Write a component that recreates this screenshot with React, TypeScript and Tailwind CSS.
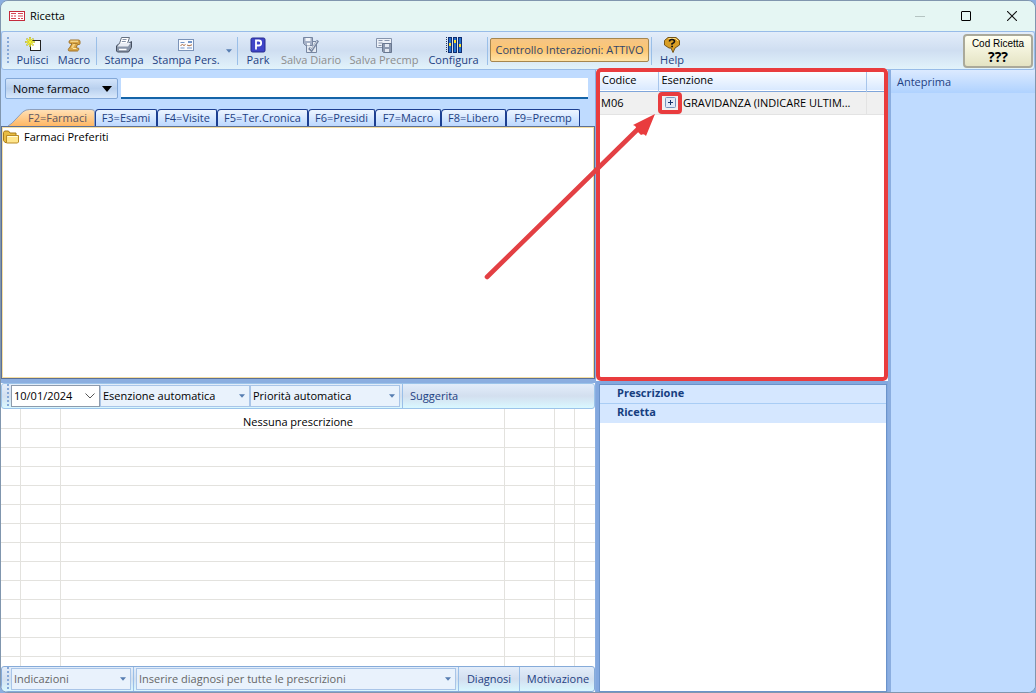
import React from "react";

type IconProps = { children: React.ReactNode };

function Glyph({ children }: IconProps) {
  return (
    <svg viewBox="0 0 16 16" className="h-4 w-4 shrink-0" aria-hidden="true">
      {children}
    </svg>
  );
}

const CleanIcon = () => (
  <Glyph>
    <rect x="5.5" y="3.5" width="10" height="10" fill="#fff" stroke="#222" />
    <path d="M5 0v10M0 5h10M1.500 1.500l7 7M8.500 1.500l-7 7" stroke="#b8b428" strokeWidth="1.600" />
    <path d="M5 1v8M1 5h8M2 2l6 6M8 2l-6 6" stroke="#f7f238" strokeWidth="1" />
  </Glyph>
);

const MacroIcon = () => (
  <Glyph>
    <path d="M4.500 3h8q1.500 0 1.500 1.500v2q0 1-1 1h-1.500l-1.500 3.500h2q1 0 .8 1.200T11.500 14H3.500q-1.500 0-1.200-1.500T3.500 11l2.500-4.500H4.500Q3 6.500 3 5t1.500-2z" fill="#d9a646" stroke="#a17328" />
    <path d="M4.500 4.200h7.500M7 11.500h3.500" stroke="#ffe9a8" />
    <path d="M8.500 6.500l-2.500 4.500" stroke="#f6d27e" strokeWidth="2" />
    <path d="M7 6.500h4.500" stroke="#a17328" strokeWidth=".8" />
  </Glyph>
);

const PrinterIcon = () => (
  <Glyph>
    <path d="M5.500.5h8l-2 6h-8z" fill="#fff" stroke="#65707f" />
    <path d="M6.500 2.500h4M5.800 4.500h4" stroke="#8693a8" />
    <path d="M3 6.500h9.500l3-2v6l-3 4.500H1.500l-1-1V9z" fill="#8995a8" stroke="#454f60" />
    <path d="M1.500 9.500h10.500l2.500-3.500H4z" fill="#e9edf4" />
    <path d="M3 12.500h7.500" stroke="#fff" strokeWidth="1.500" />
  </Glyph>
);

const CardIcon = () => (
  <Glyph>
    <rect x=".5" y="2.500" width="15" height="11" fill="#fafcff" stroke="#7b93b8" />
    <path d="M2.500 5.500h4M2.500 11h4M9 11h5" stroke="#7295c8" />
    <path d="M10 5h4" stroke="#7295c8" strokeWidth="2" />
    <path d="M2.500 8.500l2-1 1.500 1 1.500-1M9 8l2 .8 3-1" stroke="#aa6c42" fill="none" />
  </Glyph>
);

const ParkIcon = () => (
  <Glyph>
    <rect x="1" y="1" width="14" height="14" rx="1.500" fill="#3f45c8" stroke="#292d8e" />
    <path d="M6 12.500v-9h2.800q2.400 0 2.400 2.500T8.800 8.500H6" fill="none" stroke="#fff" strokeWidth="1.800" />
  </Glyph>
);

const SaveDiaryIcon = () => (
  <Glyph>
    <path d="M3.500 4.500h10v11h-10z" fill="#e4e9f1" stroke="#7786a1" />
    <path d="M.5.5h9v8h-7l-2-2z" fill="#a4b0c6" stroke="#7786a1" />
    <path d="M2.500 1h5v3h-5zM4 6h3v2.500H4z" fill="#f2f5fa" />
    <path d="M6 11l2.500 2.500L15 3.500" fill="none" stroke="#7786a1" strokeWidth="2.600" />
    <path d="M7 11l1.500 1.500L14 4" fill="none" stroke="#eef2f8" strokeWidth=".8" />
  </Glyph>
);

const SavePrecmpIcon = () => (
  <Glyph>
    <path d="M.5 1.500h15v9H.5z" fill="#edf1f8" stroke="#8795ad" />
    <path d="M2.500 3.500h4M8.500 3.500h5M2.500 6h4M2.500 8.500h3" stroke="#8795ad" />
    <path d="M6.500 6.500h9v9h-8l-1-1z" fill="#8c99b0" stroke="#68778f" />
    <path d="M9 7h4v3H9zM9 12h4v3H9z" fill="#e2e8f2" />
  </Glyph>
);

const SlidersIcon = () => (
  <Glyph>
    <path d="M.5 0v16" stroke="#26385e" strokeDasharray="1 1" />
    <path d="M2 0h4v16H2zM7 0h4v16H7zM12 0h4v16h-4z" fill="#102d70" />
    <path d="M4 1v14M9 1v14M14 1v14" stroke="#2672cf" strokeWidth="2" />
    <path d="M3 6h2v3H3zM8 3h2v3H8zM13 7h2v3h-2z" fill="#ffe32a" />
  </Glyph>
);

const HelpIcon = () => (
  <Glyph>
    <path d="M4 .5h8l3.500 3v4.500L11 11l-2 4.500-2-4.500H5L.5 8V3.500z" fill="#d99e24" stroke="#765518" />
    <path d="M4.500 1.500h7l2.500 2.500" stroke="#ffe086" fill="none" />
    <path d="M5.500 4.500q0-2 2.500-2t2.500 2q0 1.200-2.500 2.300v1" fill="none" stroke="#111" strokeWidth="1.600" />
    <path d="M7.200 8.800h1.800v1.500H7.200z" fill="#111" />
  </Glyph>
);

function Down({ dark }: { dark?: boolean }) {
  return (
    <svg viewBox="0 0 10 6" className={dark ? "h-[6px] w-[10px]" : "h-[4px] w-[6px]"} aria-hidden="true">
      <path d="M0 0h10L5 6z" fill={dark ? "#000" : "#567db1"} />
    </svg>
  );
}

function ToolButton({ icon, label, width, disabled }: { icon: React.ReactNode; label: string; width: string; disabled?: boolean }) {
  return (
    <button
      disabled={disabled}
      className={`flex shrink-0 flex-col items-center whitespace-nowrap leading-[14px] ${width} ${disabled ? "text-[#8d8d8d]" : "text-[#1e3f82]"}`}
    >
      {icon}
      {label}
    </button>
  );
}

const Divider = () => <span className="mx-[2px] w-px shrink-0 self-stretch bg-[#9abfe8]" />;

const Grip = () => (
  <span className="ml-[5px] mr-[2px] w-[2px] shrink-0 self-stretch bg-[repeating-linear-gradient(to_bottom,#86a8d8_0_2px,transparent_2px_4px)]" />
);

function Combo({ label, width, muted }: { label: string; width: string; muted?: boolean }) {
  return (
    <div className={`relative h-[22px] border border-[#a9c5e8] bg-[#e9f2fc] ${width}`}>
      <select
        aria-label={label}
        className={`h-full w-full appearance-none bg-transparent pl-[2px] pr-4 outline-none ${muted ? "text-[#666]" : "text-black"}`}
      >
        <option>{label}</option>
      </select>
      <span className="pointer-events-none absolute right-1 top-2">
        <Down />
      </span>
    </div>
  );
}

const tabs = [
  { label: "F3=Esami", width: "w-[62px]" },
  { label: "F4=Visite", width: "w-[60px]" },
  { label: "F5=Ter.Cronica", width: "w-[91px]" },
  { label: "F6=Presidi", width: "w-[67px]" },
  { label: "F7=Macro", width: "w-[66px]" },
  { label: "F8=Libero", width: "w-[65px]" },
  { label: "F9=Precmp", width: "w-[74px]" },
];

function TitleBar() {
  return (
    <header className="flex h-[30px] shrink-0 items-center bg-[#e5f6f3] pl-2">
      <svg viewBox="0 0 16 10" className="h-[10px] w-4" aria-hidden="true">
        <rect x=".5" y=".5" width="15" height="9" fill="#fff" stroke="#c42b3c" />
        <path d="M2 2.500h5M9 2.500h5M2 5h2M5 5h2M9 5h5M2 7.500h5M9 7.500h2M12 7.500h2" stroke="#d44755" />
      </svg>
      <h1 className="ml-[5px] flex-1 text-[11px] text-black">Ricetta</h1>
      <button aria-label="Riduci" className="flex h-full w-[46px] items-center justify-center">
        <span className="h-px w-[10px] bg-[#b5c4c2]" />
      </button>
      <button aria-label="Ingrandisci" className="flex h-full w-[46px] items-center justify-center">
        <span className="h-[10px] w-[10px] rounded-[1px] border border-black" />
      </button>
      <button aria-label="Chiudi" className="flex h-full w-[46px] items-center justify-center">
        <svg viewBox="0 0 10 10" className="h-[10px] w-[10px]" aria-hidden="true">
          <path d="M0 0l10 10M10 0L0 10" stroke="#111" strokeWidth="1.100" />
        </svg>
      </button>
    </header>
  );
}

function Toolbar() {
  return (
    <div className="flex h-[39px] shrink-0 items-start rounded-[3px] border border-[#98bce8] bg-linear-to-b from-[#e3edfa] via-[#cfdef1] to-[#e2f3fb] pb-1 pt-[5px]">
      <Grip />
      <ToolButton icon={<CleanIcon />} label="Pulisci" width="w-[43px]" />
      <ToolButton icon={<MacroIcon />} label="Macro" width="w-[40px]" />
      <Divider />
      <ToolButton icon={<PrinterIcon />} label="Stampa" width="w-[50px]" />
      <ToolButton icon={<CardIcon />} label="Stampa Pers." width="w-[74px]" />
      <button aria-label="Altre stampe" className="flex w-[12px] justify-center self-center"><Down /></button>
      <Divider />
      <ToolButton icon={<ParkIcon />} label="Park" width="w-[36px]" />
      <ToolButton icon={<SaveDiaryIcon />} label="Salva Diario" width="w-[70px]" disabled />
      <ToolButton icon={<SavePrecmpIcon />} label="Salva Precmp" width="w-[76px]" disabled />
      <ToolButton icon={<SlidersIcon />} label="Configura" width="w-[63px]" />
      <Divider />
      <button className="mt-px h-6 w-[159px] shrink-0 whitespace-nowrap rounded-[2px] border border-[#a5864f] bg-linear-to-b from-[#f5c585] via-[#fdc671] to-[#ffe3a6] text-[#33466b]">
        Controllo Interazioni: ATTIVO
      </button>
      <Divider />
      <ToolButton icon={<HelpIcon />} label="Help" width="w-[36px]" />
      <button className="ml-auto mr-px flex h-[34px] w-[70px] shrink-0 flex-col items-center justify-center self-center rounded-[4px] border-2 border-[#aaa99a] bg-linear-to-b from-[#fffff0] to-[#e4e3c3] text-black">
        <span className="font-['Liberation_Sans',sans-serif] text-[10px] leading-[12px]">Cod Ricetta</span>
        <span className="text-[14px] font-bold leading-[14px]">???</span>
      </button>
    </div>
  );
}

function DrugSearch() {
  return (
    <section className="mb-1 flex min-h-0 flex-col bg-[#bfdbff]">
      <div className="flex pb-[10px] pl-1 pr-[7px] pt-2">
        <button className="flex h-[21px] w-[113px] shrink-0 items-center justify-between rounded-[2px] border border-[#83a8d8] bg-linear-to-b from-[#d3e4fa] via-[#b9d0ee] to-[#d8e8fb] pl-[7px] pr-[5px] text-black">
          Nome farmaco
          <Down dark />
        </button>
        <input aria-label="Nome farmaco" className="ml-[3px] h-[21px] min-w-0 flex-1 border-b-2 border-[#1464a8] bg-white px-1 outline-none" />
      </div>
      <div role="tablist" className="flex h-[17px] shrink-0 pl-[7px]">
        <button role="tab" aria-selected="true" className="relative h-[17px] w-[87px] shrink-0 whitespace-nowrap pl-3 text-[#5c5560]">
          <svg viewBox="0 0 88 18" preserveAspectRatio="none" className="absolute inset-0 h-full w-full" aria-hidden="true">
            <defs>
              <linearGradient id="active" x1="0" y1="0" x2="0" y2="1">
                <stop offset="0" stopColor="#ffe1b8" />
                <stop offset="1" stopColor="#ffb763" />
              </linearGradient>
            </defs>
            <path d="M0 18L4 15 15 3Q18 .5 22 .5H84Q87.500 .5 87.500 3V18" fill="url(#active)" stroke="#8a9dba" />
          </svg>
          <span className="relative">F2=Farmaci</span>
        </button>
        {tabs.map((tab) => (
          <button
            key={tab.label}
            role="tab"
            aria-selected="false"
            className={`h-[17px] shrink-0 whitespace-nowrap rounded-tl-[4px] rounded-tr-[2px] border border-b-0 border-[#1d3f91] bg-linear-to-b from-[#edf5ff] to-[#bcd8ff] text-[#1e3f82] ${tab.width}`}
          >
            {tab.label}
          </button>
        ))}
      </div>
      <div className="min-h-0 flex-1 border border-[#5c6f94] bg-white">
        <div className="h-full border border-[#f6dfa2]">
          <ul>
            <li className="flex h-[18px] items-center gap-[5px] text-black">
              <svg viewBox="0 0 16 14" className="h-[14px] w-4" aria-hidden="true">
                <path d="M.5 2.500l1-1.500h4l1.500 2h6v9.500h-11l-1.500-2z" fill="#e8bc42" stroke="#a67a18" />
                <path d="M3.500 5.500h12v6.500l-1 1h-11z" fill="#ffe68d" stroke="#b98b24" />
                <path d="M4.500 6.500h10" stroke="#fffbd8" />
              </svg>
              Farmaci Preferiti
            </li>
          </ul>
        </div>
      </div>
    </section>
  );
}

function Prescriptions() {
  return (
    <section className="flex min-h-0 flex-col bg-white">
      <div className="flex h-[26px] shrink-0 items-center rounded-[3px] border border-[#9cc4ea] bg-linear-to-b from-[#e3edfa] via-[#d3dfef] to-[#d9f8ff]">
        <Grip />
        <div className="flex h-[22px] w-[89px] border border-[#8d9bad] bg-white">
          <input aria-label="Data" defaultValue="10/01/2024" className="min-w-0 flex-1 pl-[2px] text-black outline-none" />
          <button aria-label="Apri calendario" className="w-[14px]">
            <svg viewBox="0 0 10 6" className="h-[6px] w-[10px]" aria-hidden="true">
              <path d="M.5.5L5 5 9.500.5" fill="none" stroke="#555" />
            </svg>
          </button>
        </div>
        <Combo label="Esenzione automatica" width="w-[150px]" />
        <Combo label="Priorità automatica" width="w-[150px]" />
        <Divider />
        <button className="px-[5px] text-[#1e3f82]">Suggerita</button>
      </div>
      <div className="grid min-h-0 flex-1 overflow-hidden">
        <table className="col-start-1 row-start-1 w-full table-fixed border-collapse self-start">
          <colgroup>
            <col className="w-[19px]" />
            <col className="w-10" />
            <col />
            <col className="w-[50px]" />
            <col className="w-5" />
            <col className="w-[21px]" />
          </colgroup>
          <tbody>
            {Array.from({ length: 14 }, (_, row) => (
              <tr key={row} className="h-[19px] border-b border-[#e3e2de]">
                {Array.from({ length: 6 }, (_, cell) => (
                  <td key={cell} className="border-r border-[#e3e2de] p-0 last:border-r-0" />
                ))}
              </tr>
            ))}
          </tbody>
        </table>
        <p className="z-10 col-start-1 row-start-1 pt-[5px] text-center leading-4 text-black">Nessuna prescrizione</p>
      </div>
      <div className="flex h-[26px] shrink-0 items-center rounded-[3px] border border-[#86abd9] bg-linear-to-b from-[#e3edfa] via-[#d3dfef] to-[#d9f8ff]">
        <Grip />
        <Combo label="Indicazioni" width="w-[120px]" muted />
        <Divider />
        <Combo label="Inserire diagnosi per tutte le prescrizioni" width="min-w-0 flex-1" muted />
        <Divider />
        <button className="w-[56px] text-[#1e3f82]">Diagnosi</button>
        <Divider />
        <button className="w-[72px] text-[#1e3f82]">Motivazione</button>
      </div>
    </section>
  );
}

function Exemptions() {
  return (
    <section className="relative mb-[3px] min-h-0 bg-white">
      <table className="w-full table-fixed border-collapse text-left text-black">
        <colgroup>
          <col className="w-[62px]" />
          <col />
          <col className="w-[22px]" />
        </colgroup>
        <thead>
          <tr className="h-[21px] border-b border-[#7fa5da] bg-linear-to-b from-white to-[#d9e9ff]">
            <th className="border-r border-[#a7c5eb] p-0 pl-[6px] font-normal">Codice</th>
            <th className="border-r border-[#a7c5eb] p-0 pl-[3px] font-normal">Esenzione</th>
            <th className="p-0" />
          </tr>
        </thead>
        <tbody>
          <tr className="h-5 border-b border-[#e3e3e3] bg-[#f0f0f0]">
            <td className="p-0 pl-[5px]">M06</td>
            <td className="border-r border-[#e3e3e3] p-0">
              <div className="flex items-center">
                <button aria-label="Espandi" className="flex h-[22px] w-6 shrink-0 items-center justify-center rounded-[4px] border-4 border-[#e93c3e] bg-[#f0f0f0]">
                  <svg viewBox="0 0 11 11" className="h-[11px] w-[11px] shrink-0" aria-hidden="true">
                    <rect x=".5" y=".5" width="10" height="10" rx="1" fill="#e1e9f6" stroke="#7794bd" />
                    <path d="M3 5.500h5M5.500 3v5" stroke="#17356c" />
                  </svg>
                </button>
                <span className="ml-px whitespace-nowrap">GRAVIDANZA (INDICARE ULTIM...</span>
              </div>
            </td>
            <td className="p-0" />
          </tr>
        </tbody>
      </table>
      <div className="pointer-events-none absolute -top-[2px] bottom-0 left-0 right-0 rounded-[5px] border-4 border-[#e93c3e]" />
      <svg viewBox="0 0 175 170" className="pointer-events-none absolute -left-[112px] top-[42px] h-[170px] w-[175px]" aria-hidden="true">
        <path d="M3 165L154 17" stroke="#e34044" strokeWidth="4.600" strokeLinecap="round" />
        <path d="M171 2L149 13Q153 14 152 18L157 23Q160 21 162 24z" fill="#e93c3e" />
      </svg>
    </section>
  );
}

export default function App() {
  return (
    <main className="flex h-screen flex-col overflow-hidden bg-[#8baee0] font-['Open_Sans',sans-serif] text-[11px] leading-4">
      <div className="flex min-h-0 flex-1 flex-col overflow-hidden rounded-[8px] border border-[#8096ae] bg-[#bfdbff]">
        <TitleBar />
        <Toolbar />
        <div className="grid min-h-0 flex-1 grid-cols-[minmax(0,1fr)_292px_147px]">
          <div className="grid min-h-0 grid-rows-[minmax(0,313fr)_minmax(0,309fr)] bg-[#8baee0] pr-px">
            <DrugSearch />
            <Prescriptions />
          </div>
          <div className="grid min-h-0 grid-rows-[minmax(0,314fr)_minmax(0,308fr)] bg-[#83a8df]">
            <Exemptions />
            <section className="ml-[3px] mr-px border border-[#6b93ca] bg-white font-bold text-[#163e80]">
              <h2 className="h-[19px] border-b border-[#a9cdf5] bg-[#d5e7ff] pl-[17px]">Prescrizione</h2>
              <h2 className="h-[19px] bg-[#d5e7ff] pl-[17px]">Ricetta</h2>
            </section>
          </div>
          <aside className="border-l-[3px] border-[#8baee0] bg-[#bfdbff]">
            <h2 className="h-[23px] bg-linear-to-b from-[#dceaff] to-[#afd2ff] pl-[6px] leading-6 text-[#1e3f82]">Anteprima</h2>
          </aside>
        </div>
      </div>
    </main>
  );
}
